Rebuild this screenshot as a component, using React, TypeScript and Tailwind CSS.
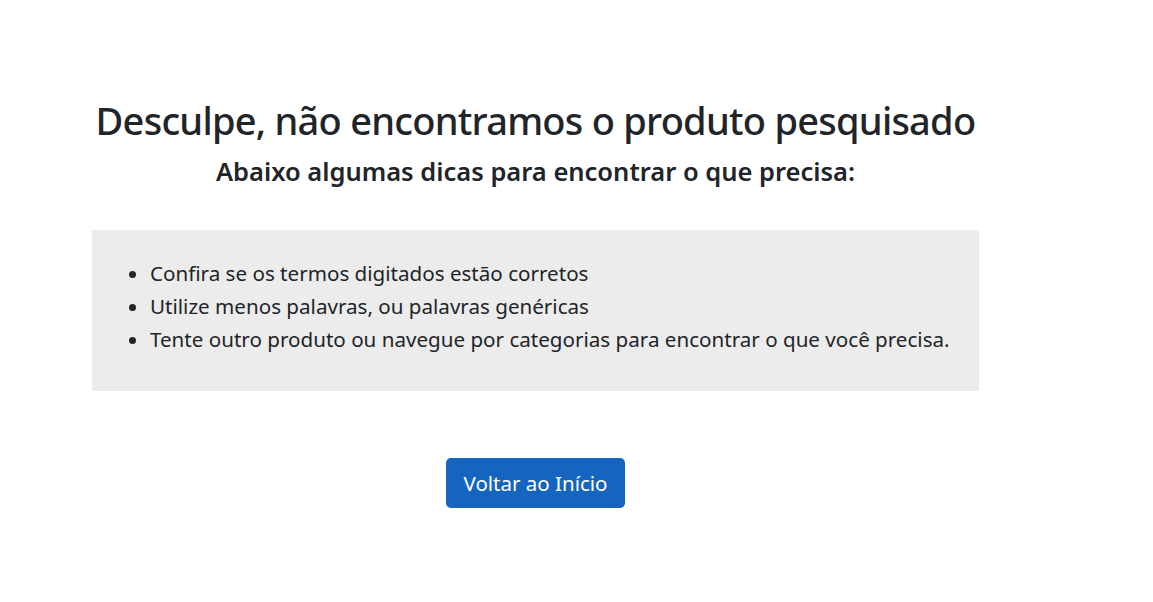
import React from "react";

const tips = [
  "Confira se os termos digitados estão corretos",
  "Utilize menos palavras, ou palavras genéricas",
  "Tente outro produto ou navegue por categorias para encontrar o que você precisa.",
];

const NotFound = () => {
  return (
    <div className="min-h-screen bg-white font-['Noto_Sans',sans-serif] text-[#212529]">
      <div className="ml-[92px] w-[887px] pt-[96px]">
        <h1 className="whitespace-nowrap text-center text-[38px] font-medium leading-[48px] tracking-[-0.75px]">
          Desculpe, não encontramos o produto pesquisado
        </h1>
        <h2 className="mt-[13px] text-center text-[25.5px] font-semibold leading-[29px]">
          Abaixo algumas dicas para encontrar o que precisa:
        </h2>
        <div className="mt-[44px] bg-[#ececec] pt-[27px] pb-[35px] pl-[58px] pr-4">
          <ul className="list-disc text-[20.6px] leading-[33px]">
            {tips.map((tip) => (
              <li key={tip}>{tip}</li>
            ))}
          </ul>
        </div>
        <div className="mt-[67px] flex justify-center">
          <button
            aria-label="go-home"
            className="h-[50px] w-[179px] rounded-[5px] bg-[#1565c0] text-[20.5px] text-white"
          >
            Voltar ao Início
          </button>
        </div>
      </div>
    </div>
  );
};

export default NotFound;
